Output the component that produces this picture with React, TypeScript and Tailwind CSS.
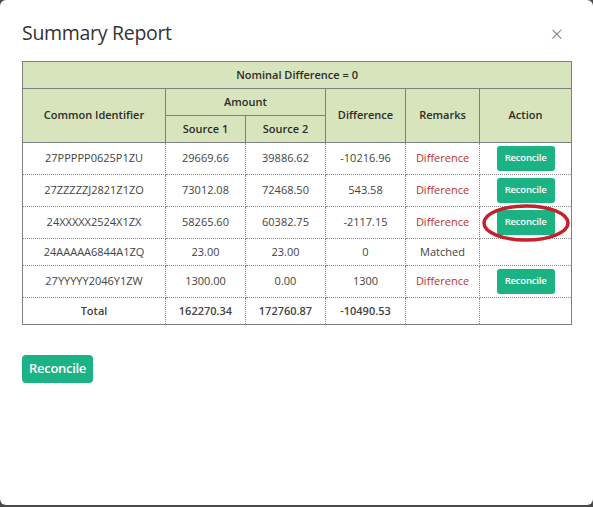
import React from 'react';

type Row = {
  id: string;
  s1: string;
  s2: string;
  diff: string;
  matched: boolean;
  circled?: boolean;
};

const rows: Row[] = [
  { id: '27PPPPP0625P1ZU', s1: '29669.66', s2: '39886.62', diff: '-10216.96', matched: false },
  { id: '27ZZZZZJ2821Z1ZO', s1: '73012.08', s2: '72468.50', diff: '543.58', matched: false },
  { id: '24XXXXX2524X1ZX', s1: '58265.60', s2: '60382.75', diff: '-2117.15', matched: false, circled: true },
  { id: '24AAAAA6844A1ZQ', s1: '23.00', s2: '23.00', diff: '0', matched: true },
  { id: '27YYYYY2046Y1ZW', s1: '1300.00', s2: '0.00', diff: '1300', matched: false },
];

const th = 'border border-solid border-[#808080] bg-[#d8e4bc] font-semibold text-[11px] text-[#2b2b2b] text-center';
const td = 'border border-dotted border-[#8c8c8c] text-[11px] text-[#444] text-center';

function SmallButton({ circled }: { circled?: boolean }) {
  return (
    <div className="relative flex justify-center">
      <button className="w-[58px] h-[25px] rounded-[3px] bg-[#1bb383] text-white text-[9.5px] font-semibold tracking-[-0.2px]">
        Reconcile
      </button>
      {/* red marker drawn around the third button */}
      {circled && (
        <svg className="absolute left-1/2 top-1/2 -translate-x-1/2 -translate-y-1/2 pointer-events-none" width="92" height="40" viewBox="0 0 92 40">
          <ellipse cx="46" cy="20" rx="42" ry="17" fill="none" stroke="#c3222b" strokeWidth="3.5" />
        </svg>
      )}
    </div>
  );
}

export default function App() {
  return (
    <div className="w-[593px] h-[507px] bg-[#4a4a4a]" style={{ fontFamily: '"Open Sans", "Noto Sans", sans-serif' }}>
      <div className="w-full h-[505px] bg-white rounded-[6px] px-[22px]">
        {/* Header */}
        <div className="flex items-center justify-between h-[61px] pt-[5px]">
          <h2 className="text-[19.5px] text-[#333] tracking-[-0.3px]">Summary Report</h2>
          <span className="text-[22px] text-[#777] font-light mr-[8px] leading-none">×</span>
        </div>

        {/* Table */}
        <table className="w-[549px] border-collapse border border-solid border-[#808080] table-fixed">
          <colgroup>
            <col className="w-[143px]" />
            <col className="w-[80px]" />
            <col className="w-[80px]" />
            <col className="w-[80px]" />
            <col className="w-[74px]" />
            <col className="w-[92px]" />
          </colgroup>
          <thead>
            <tr className="h-[27px]">
              <th colSpan={6} className={th}>Nominal Difference = 0</th>
            </tr>
            <tr className="h-[27px]">
              <th rowSpan={2} className={th}>Common Identifier</th>
              <th colSpan={2} className={th}>Amount</th>
              <th rowSpan={2} className={th}>Difference</th>
              <th rowSpan={2} className={th}>Remarks</th>
              <th rowSpan={2} className={th}>Action</th>
            </tr>
            <tr className="h-[27px]">
              <th className={th}>Source 1</th>
              <th className={th}>Source 2</th>
            </tr>
          </thead>
          <tbody>
            {rows.map((r) => (
              <tr key={r.id} className={r.matched ? 'h-[27px]' : 'h-[32px]'}>
                <td className={td}>{r.id}</td>
                <td className={td}>{r.s1}</td>
                <td className={td}>{r.s2}</td>
                <td className={td}>{r.diff}</td>
                <td className={td}>
                  {r.matched ? <span>Matched</span> : <span className="text-[#c0302b]">Difference</span>}
                </td>
                <td className={td}>{!r.matched && <SmallButton circled={r.circled} />}</td>
              </tr>
            ))}
            <tr className="h-[27px]">
              <td className={`${td} font-semibold text-[#2b2b2b]`}>Total</td>
              <td className={`${td} font-semibold text-[#2b2b2b]`}>162270.34</td>
              <td className={`${td} font-semibold text-[#2b2b2b]`}>172760.87</td>
              <td className={`${td} font-semibold text-[#2b2b2b]`}>-10490.53</td>
              <td className={td}></td>
              <td className={td}></td>
            </tr>
          </tbody>
        </table>

        {/* Footer action */}
        <button className="mt-[30px] w-[71px] h-[28px] rounded-[4px] bg-[#1bb383] text-white text-[13px] font-semibold tracking-[-0.3px]">
          Reconcile
        </button>
      </div>
    </div>
  );
}
